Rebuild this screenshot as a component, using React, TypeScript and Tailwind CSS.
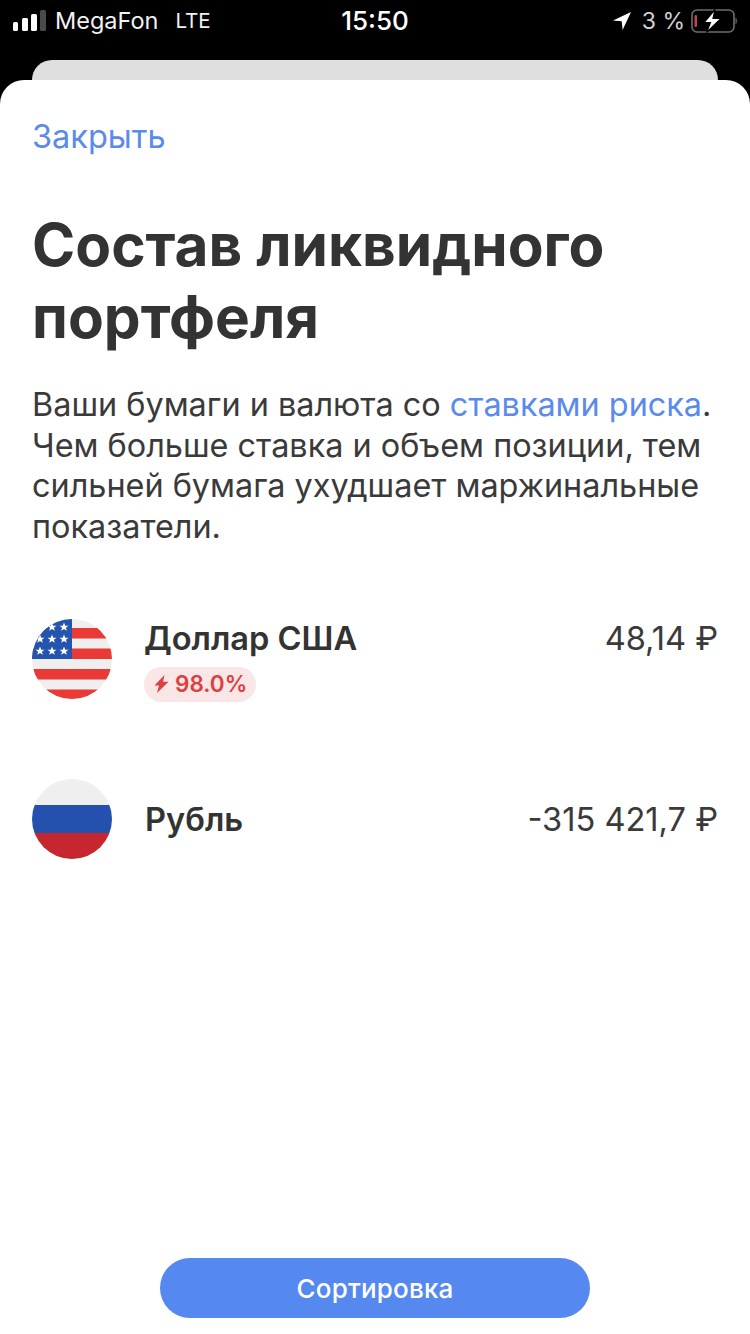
import React from "react";

const font = { fontFamily: '"Inter", "Noto Sans", sans-serif' };

const SignalBars = () => (
  <svg width="34" height="22" viewBox="0 0 34 22" className="block">
    <rect x="0" y="12" width="5" height="9" rx="1.5" fill="#fff" />
    <rect x="9" y="8" width="6" height="13" rx="1.5" fill="#fff" />
    <rect x="18" y="4" width="6" height="17" rx="1.5" fill="#fff" />
    <rect x="27" y="0" width="6" height="21" rx="1.5" fill="#4a4a4a" />
  </svg>
);

const Battery = () => (
  <svg width="46" height="24" viewBox="0 0 46 24" className="block">
    <rect x="1" y="1" width="42" height="22" rx="5" fill="none" stroke="#6e6e6e" strokeWidth="1.6" />
    <rect x="3.5" y="6" width="2.5" height="12" rx="1" fill="#c0474a" />
    <path d="M44.5 8.5v7c1-.4 1.3-1.8 1.3-3.5s-.3-3.1-1.3-3.5z" fill="#6e6e6e" />
    <path d="M24 .5 13 13.5h6.5L15.500 23.500 30 9.500h-8z" fill="#fff" stroke="#000" strokeWidth="1.2" />
  </svg>
);

const UsFlag = () => {
  const stars = [
    [20, 8],
    [32, 8],
    [8, 20],
    [20, 20],
    [32, 20],
    [8, 32],
    [20, 32],
    [32, 32],
  ];
  return (
    <svg width="80" height="80" viewBox="0 0 80 80" className="block shrink-0">
      <defs>
        <clipPath id="us-clip">
          <circle cx="40" cy="40" r="40" />
        </clipPath>
      </defs>
      <g clipPath="url(#us-clip)">
        <rect width="80" height="80" fill="#efefef" />
        <rect y="9" width="80" height="10.5" fill="#e93a35" />
        <rect y="29.5" width="80" height="10.5" fill="#e93a35" />
        <rect y="50" width="80" height="10.5" fill="#e93a35" />
        <rect y="70.5" width="80" height="10" fill="#e93a35" />
        <rect width="40" height="40" fill="#2454ae" />
        {stars.map(([x, y]) => (
          <path
            key={`${x}-${y}`}
            transform={`translate(${x} ${y}) scale(1.25)`}
            d="M0-3.6 1 -1.1 3.6-1.1 1.500.5 2.300 3 0 1.500-2.300 3-1.500.5-3.600-1.100-1-1.100z"
            fill="#fff"
          />
        ))}
      </g>
    </svg>
  );
};

const RuFlag = () => (
  <svg width="80" height="80" viewBox="0 0 80 80" className="block shrink-0">
    <defs>
      <clipPath id="ru-clip">
        <circle cx="40" cy="40" r="40" />
      </clipPath>
    </defs>
    <g clipPath="url(#ru-clip)">
      <rect width="80" height="26" fill="#efefef" />
      <rect y="26" width="80" height="28" fill="#2450ae" />
      <rect y="54" width="80" height="26" fill="#c5262f" />
    </g>
  </svg>
);

export default function App() {
  return (
    <div className="w-[750px] h-[1334px] bg-black flex flex-col overflow-hidden" style={font}>
      {/* Status bar */}
      <div className="h-[60px] shrink-0 grid grid-cols-3 items-center text-white pl-[13px] pr-[13px] pb-[18px]">
        <div className="flex items-center">
          <SignalBars />
          <span className="ml-[8px] text-[23.500px] leading-none text-[#f2f2f2]">MegaFon</span>
          <span className="ml-[17px] text-[20.500px] leading-none text-[#f2f2f2]">LTE</span>
        </div>
        <div className="text-center text-[26px] leading-none font-medium">15:50</div>
        <div className="flex items-center justify-end">
          <svg width="20" height="20" viewBox="0 0 20 20" className="block">
            <path d="M19 1 1 9.500l8.700.7.900 8.800z" fill="#fff" />
          </svg>
          <span className="ml-[10px] text-[23px] leading-none text-[#d0d0d0]">3 %</span>
          <span className="ml-[6px]">
            <Battery />
          </span>
        </div>
      </div>

      {/* Card behind the sheet */}
      <div className="mx-[32px] h-[20px] shrink-0 bg-[#dfdfdf] rounded-t-[20px]" />

      {/* Sheet */}
      <div className="flex-1 bg-white rounded-t-[24px] px-[32px] flex flex-col text-[#333333]">
        <div className="mt-[36px] text-[32.500px] leading-[42px] text-[#5a8bea]">Закрыть</div>

        <h1 className="mt-[51px] text-[58.500px] leading-[72px] font-bold">Состав ликвидного портфеля</h1>

        <p className="mt-[32px] text-[32.400px] leading-[40.700px] text-[#3a3a3a]">
          Ваши бумаги и валюта со <span className="text-[#5a8bea]">ставками риска</span>.
          <br />
          Чем больше ставка и объем позиции, тем
          <br />
          сильней бумага ухудшает маржинальные
          <br />
          показатели.
        </p>

        <div className="mt-[71px] flex items-start">
          <UsFlag />
          <div className="ml-[32px] flex-1 flex flex-col items-start">
            <div className="-mt-[1px] text-[32.600px] leading-[40px] font-semibold">Доллар США</div>
            <div className="mt-[9px] h-[35px] pl-[10px] pr-[9px] rounded-full bg-[#fae6e6] flex items-center text-[#dc4040] text-[22.500px] font-semibold">
              <svg width="15" height="18" viewBox="0 0 15 18" className="block mr-[6px]">
                <path d="M10.500 0 .5 10.500h4.500L3 18 14.500 6.800H9z" fill="#dc4040" />
              </svg>
              98.0%
            </div>
          </div>
          <div className="-mt-[1px] text-[32.600px] leading-[40px] text-[#3a3a3a]">48,14 ₽</div>
        </div>

        <div className="mt-[77px] flex items-center">
          <RuFlag />
          <div className="ml-[33px] flex-1 text-[32.600px] leading-[40px] font-semibold">Рубль</div>
          <div className="text-[32.600px] leading-[40px] text-[#3a3a3a]">-315 421,7 ₽</div>
        </div>

        <div className="mt-auto mb-[16px] flex justify-center">
          <button className="w-[430px] h-[60px] rounded-full bg-[#5589f0] text-white text-[26px] font-[550] tracking-[0.2px]">
            Сортировка
          </button>
        </div>
      </div>
    </div>
  );
}
